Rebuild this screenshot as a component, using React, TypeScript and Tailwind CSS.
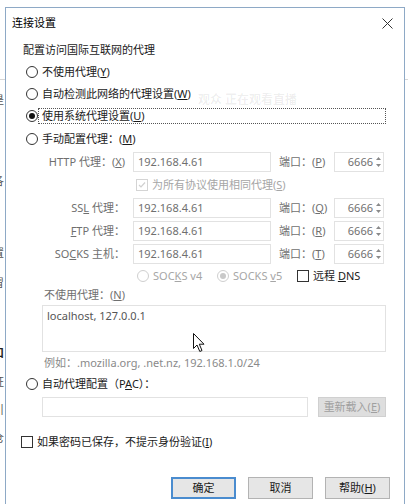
import React from "react";

function Radio({ checked = false, disabled = false }: { checked?: boolean; disabled?: boolean }) {
  return (
    <span
      className={`w-[12px] h-[12px] shrink-0 rounded-full border flex items-center justify-center bg-white ${
        disabled ? "border-[#cfcfcf]" : "border-[#333333]"
      }`}
    >
      {checked && (
        <span className={`w-[6px] h-[6px] rounded-full ${disabled ? "bg-[#c9c9c9]" : "bg-[#111111]"}`} />
      )}
    </span>
  );
}

function Check({ disabled = false, checked = false }: { disabled?: boolean; checked?: boolean }) {
  return (
    <span
      className={`w-[12px] h-[12px] shrink-0 border bg-white flex items-center justify-center ${
        disabled ? "border-[#d4d4d4]" : "border-[#333333]"
      }`}
    >
      {checked && (
        <svg width="8" height="8" viewBox="0 0 8 8">
          <path d="M1 4 L3 6 L7 1.5" fill="none" stroke="#d0d0d0" strokeWidth="1.2" />
        </svg>
      )}
    </span>
  );
}

function IpInput({ value }: { value: string }) {
  return (
    <div className="ml-[8px] w-[138px] h-[20px] border border-[#e2e2e2] bg-white flex items-center pl-[4px] text-[#6f6f6f]">
      {value}
    </div>
  );
}

function PortInput() {
  return (
    <div className="w-[50px] h-[20px] border border-[#e2e2e2] bg-white flex items-center justify-end text-[#6f6f6f]">
      <span>6666</span>
      <svg width="9" height="14" viewBox="0 0 9 14" className="ml-[1px]">
        <path d="M2 5 L4.5 2 L7 5 Z" fill="#8a8a8a" />
        <path d="M2 9 L4.5 12 L7 9 Z" fill="#8a8a8a" />
      </svg>
    </div>
  );
}

function ProxyRow({ label, port }: { label: React.ReactNode; port: React.ReactNode }) {
  return (
    <div className="h-[23px] flex items-center">
      <div className="w-[102px] text-right text-[#6f6f6f] whitespace-nowrap">{label}</div>
      <IpInput value="192.168.4.61" />
      <div className="w-[63px] pl-[8px] text-[#6f6f6f] whitespace-nowrap">{port}</div>
      <PortInput />
    </div>
  );
}

export default function App() {
  return (
    <div className="relative w-[408px] h-[504px] overflow-hidden bg-white flex font-['Noto_Sans','Noto_Sans_CJK_SC',sans-serif] text-[11px] leading-[14px] text-[#1a1a1a]">
      {/* background window fragments on the left */}
      <div className="w-[5px] shrink-0 overflow-hidden bg-white flex flex-col text-[#555555]">
        <div className="h-[79px] shrink-0" />
        <div className="h-px shrink-0 bg-[#d6d6d6]" />
        <div className="h-[13px] shrink-0" />
        <div className="h-[14px] shrink-0 -ml-[7px]">是</div>
        <div className="h-[67px] shrink-0" />
        <div className="h-[14px] shrink-0 -ml-[7px]">各</div>
        <div className="h-[58px] shrink-0" />
        <div className="h-[14px] shrink-0 -ml-[7px]">置</div>
        <div className="h-[16px] shrink-0" />
        <div className="h-[14px] shrink-0 -ml-[7px]">冒</div>
        <div className="h-[56px] shrink-0" />
        <div className="h-[14px] shrink-0 -ml-[7px] font-bold text-[#222222]">口</div>
        <div className="h-[15px] shrink-0" />
        <div className="h-[14px] shrink-0 -ml-[7px]">证</div>
        <div className="h-[14px] shrink-0" />
        <div className="h-[14px] shrink-0 -ml-[7px]">引</div>
        <div className="h-[14px] shrink-0" />
        <div className="h-[14px] shrink-0 -ml-[7px]">仓</div>
      </div>

      {/* dialog */}
      <div className="mt-[7px] w-[400px] h-[497px] shrink-0 border-l border-t border-r border-[#8ea9c6] bg-white flex flex-col">
        {/* title bar */}
        <div className="h-[30px] shrink-0 flex items-center justify-between pl-[6px] pr-[11px]">
          <span className="text-[#000000]">连接设置</span>
          <svg width="11" height="11" viewBox="0 0 11 11">
            <path d="M0.5 0.5 L10.5 10.5 M10.5 0.5 L0.5 10.5" stroke="#333333" strokeWidth="1" />
          </svg>
        </div>

        {/* body */}
        <div className="flex flex-col pl-[17px] pr-[18px]">
          <div className="h-[23px] flex items-center">配置访问国际互联网的代理</div>

          <div className="h-[22px] flex items-center pl-[3px] gap-[4px]">
            <Radio />
            <span>
              不使用代理(<u>Y</u>)
            </span>
          </div>
          <div className="h-[22px] flex items-center pl-[3px] gap-[4px]">
            <Radio />
            <span>
              自动检测此网络的代理设置(<u>W</u>)
            </span>
          </div>
          <div className="h-[22px] flex items-center pl-[3px]">
            <Radio checked />
            <div className="flex-1 h-[16px] border border-dotted border-[#555555] flex items-center pl-[3px]">
              使用系统代理设置(<u>U</u>)
            </div>
          </div>
          <div className="h-[23px] flex items-center pl-[3px] gap-[4px]">
            <Radio />
            <span>
              手动配置代理：(<u>M</u>)
            </span>
          </div>

          <ProxyRow
            label={
              <>
                HTTP 代理：(<u>X</u>)
              </>
            }
            port={
              <>
                端口：(<u>P</u>)
              </>
            }
          />

          <div className="h-[23px] flex items-center pl-[113px] gap-[4px] text-[#a6a6a6]">
            <Check disabled checked />
            <span>
              为所有协议使用相同代理(<u>S</u>)
            </span>
          </div>

          <ProxyRow
            label={
              <>
                SS<u>L</u> 代理：
              </>
            }
            port={
              <>
                端口：(<u>Q</u>)
              </>
            }
          />
          <ProxyRow
            label={
              <>
                <u>F</u>TP 代理：
              </>
            }
            port={
              <>
                端口：(<u>R</u>)
              </>
            }
          />
          <ProxyRow
            label={
              <>
                SO<u>C</u>KS 主机：
              </>
            }
            port={
              <>
                端口：(<u>T</u>)
              </>
            }
          />

          <div className="h-[21px] flex items-center pl-[114px]">
            <Radio disabled />
            <span className="ml-[4px] w-[64px] text-[#a6a6a6] whitespace-nowrap">
              SOC<u>K</u>S v4
            </span>
            <Radio disabled checked />
            <span className="ml-[4px] w-[64px] text-[#a6a6a6] whitespace-nowrap">
              SOCKS <u>v</u>5
            </span>
            <Check />
            <span className="ml-[4px] whitespace-nowrap">
              远程 <u>D</u>NS
            </span>
          </div>

          <div className="h-[18px] flex items-center pl-[21px] text-[#6f6f6f]">
            不使用代理：(<u>N</u>)
          </div>
          <div className="relative mt-[1px] ml-[19px] h-[47px] border border-[#e2e2e2] bg-white pl-[4px] pt-[3px] text-[#555555]">
            localhost, 127.0.0.1
            <svg
              width="13"
              height="20"
              viewBox="0 0 13 20"
              className="absolute left-[150px] top-[27px]"
            >
              <path
                d="M0.5 0.5 L0.5 15.5 L4 12 L6.8 18.5 L9 17.5 L6.3 11.2 L11 11.2 Z"
                fill="#ffffff"
                stroke="#111111"
                strokeWidth="1"
                strokeLinejoin="round"
              />
            </svg>
          </div>
          <div className="h-[22px] flex items-center pl-[21px] text-[#8a8a8a]">
            例如：.mozilla.org, .net.nz, 192.168.1.0/24
          </div>

          <div className="h-[20px] flex items-center pl-[3px] gap-[4px]">
            <Radio />
            <span>
              自动代理配置（P<u>A</u>C）：
            </span>
          </div>
          <div className="mt-[3px] h-[20px] flex items-center pl-[19px]">
            <div className="w-[266px] h-[20px] border border-[#e2e2e2] bg-white" />
            <div className="ml-[10px] flex-1 h-[20px] border border-[#d0d0d0] bg-[#dedede] flex items-center justify-center text-[#a0a0a0]">
              重新载入(<u>E</u>)
            </div>
          </div>

          <div className="mt-[15px] h-[20px] flex items-center -ml-[2px] gap-[4px]">
            <Check />
            <span>
              如果密码已保存，不提示身份验证(<u>I</u>)
            </span>
          </div>
        </div>

        <div className="mt-[25px] flex justify-end gap-[12px] pr-[14px]">
          <div className="w-[65px] h-[22px] border-2 border-[#4a8ccf] bg-[#e6e6e6] flex items-center justify-center">
            确定
          </div>
          <div className="w-[65px] h-[22px] border border-[#b3b3b3] bg-[#e6e6e6] flex items-center justify-center">
            取消
          </div>
          <div className="w-[65px] h-[22px] border border-[#b3b3b3] bg-[#e6e6e6] flex items-center justify-center">
            帮助(<u>H</u>)
          </div>
        </div>
      </div>

      {/* right strip */}
      <div className="w-[3px] shrink-0 bg-white flex flex-col">
        <div className="h-[79px] shrink-0" />
        <div className="h-px shrink-0 bg-[#d6d6d6]" />
      </div>

      {/* faint live-stream watermark over the dialog */}
      <div className="absolute left-[198px] top-[92px] text-[12px] leading-[16px] font-bold text-[#000000]/[0.07] whitespace-nowrap pointer-events-none">
        观众 正在观看直播
      </div>
    </div>
  );
}
